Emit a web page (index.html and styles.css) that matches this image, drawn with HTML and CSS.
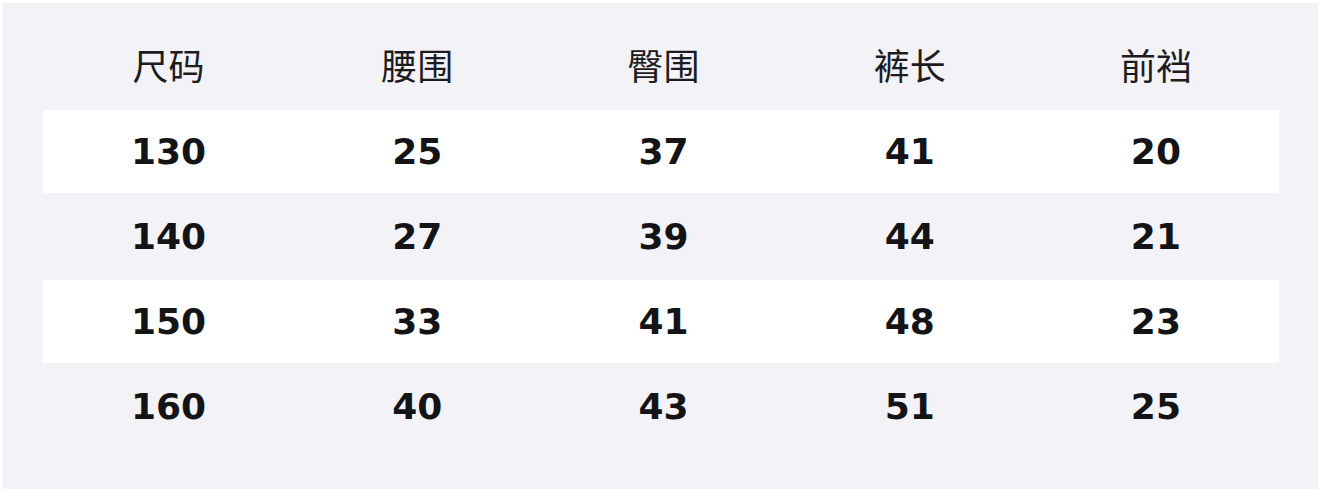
FILE: index.html
```html
<!DOCTYPE html>
<html lang="zh-CN">
<head>
<meta charset="utf-8">
<title>尺码表</title>
<link rel="stylesheet" href="styles.css">
</head>
<body>
<div class="panel">
  <div class="table">
    <div class="row head">
      <div class="cell">尺码</div><div class="cell">腰围</div><div class="cell">臀围</div><div class="cell">裤长</div><div class="cell">前裆</div>
    </div>
    <div class="row white">
      <div class="cell">130</div><div class="cell">25</div><div class="cell">37</div><div class="cell">41</div><div class="cell">20</div>
    </div>
    <div class="row">
      <div class="cell">140</div><div class="cell">27</div><div class="cell">39</div><div class="cell">44</div><div class="cell">21</div>
    </div>
    <div class="row white">
      <div class="cell">150</div><div class="cell">33</div><div class="cell">41</div><div class="cell">48</div><div class="cell">23</div>
    </div>
    <div class="row">
      <div class="cell">160</div><div class="cell">40</div><div class="cell">43</div><div class="cell">51</div><div class="cell">25</div>
    </div>
  </div>
</div>
</body>
</html>
```
FILE: styles.css
```css
html, body {
  margin: 0;
  padding: 0;
  background: #ffffff;
}
body {
  padding: 3px 4px 4px 3px;
  font-family: "DejaVu Sans", "Noto Sans CJK SC", sans-serif;
}
.panel {
  width: 1315px;
  height: 486px;
  box-sizing: border-box;
  background: #f3f2f7;
  padding: 22px 39px 0 40px;
}
.table {
  display: flex;
  flex-direction: column;
  gap: 2px;
}
.row {
  display: grid;
  grid-template-columns: 251fr 246fr 246fr 246fr 246fr;
  height: 83px;
  align-items: center;
  color: #141416;
  font-size: 36px;
  font-weight: bold;
}
.row.white {
  background: #ffffff;
}
.row.head {
  box-sizing: border-box;
  padding-bottom: 6px;
  font-family: "Noto Sans CJK SC", sans-serif;
  font-weight: normal;
  color: #1c1c1e;
  font-size: 36px;
}
.cell {
  text-align: center;
  line-height: 1;
}
```
